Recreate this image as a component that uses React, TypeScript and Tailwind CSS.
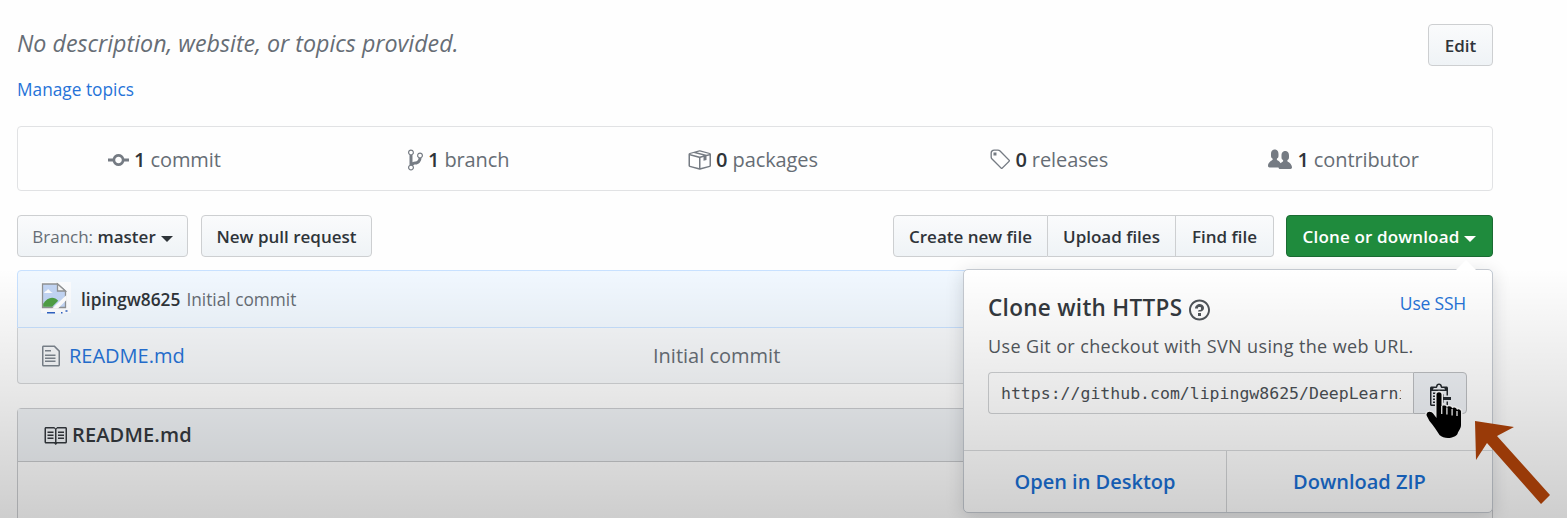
import type { ReactNode } from "react";

const paths = {
  commit:
    "M10.86 7c-.45-1.72-2-3-3.86-3-1.86 0-3.41 1.28-3.86 3H0v2h3.14c.45 1.72 2 3 3.86 3 1.86 0 3.41-1.28 3.86-3H14V7h-3.14zM7 10.2c-1.22 0-2.2-.98-2.2-2.2 0-1.22.98-2.2 2.2-2.2 1.22 0 2.2.98 2.2 2.2 0 1.22-.98 2.2-2.2 2.2z",
  branch:
    "M10 5c0-1.11-.89-2-2-2a1.993 1.993 0 0 0-1 3.72v.3c-.02.52-.23.98-.63 1.38-.4.4-.86.61-1.38.63-.83.02-1.48.16-2 .45V4.72a1.993 1.993 0 0 0-1-3.72C.88 1 0 1.89 0 3a2 2 0 0 0 1 1.72v6.56c-.59.35-1 .99-1 1.72 0 1.11.89 2 2 2 1.11 0 2-.89 2-2 0-.53-.2-1-.53-1.36.09-.06.48-.41.59-.47.25-.11.56-.17.94-.17 1.05-.05 1.95-.45 2.75-1.25S8.95 7.77 9 6.73h-.02C9.59 6.37 10 5.73 10 5zM2 1.8c.66 0 1.2.55 1.2 1.2 0 .65-.55 1.2-1.2 1.2C1.35 4.2.8 3.65.8 3c0-.65.55-1.2 1.2-1.2zm0 12.41c-.66 0-1.2-.55-1.2-1.2 0-.65.55-1.2 1.2-1.2.65 0 1.2.55 1.2 1.2 0 .65-.55 1.2-1.2 1.2zm6-8c-.66 0-1.2-.55-1.2-1.2 0-.65.55-1.2 1.2-1.2.65 0 1.2.55 1.2 1.2 0 .65-.55 1.2-1.2 1.2z",
  pkg: "M1 4.27v7.47c0 .45.3.84.75.97l6.5 1.73c.16.05.34.05.5 0l6.5-1.73c.45-.13.75-.52.75-.97V4.27c0-.45-.3-.84-.75-.97l-6.5-1.74a1.4 1.4 0 0 0-.5 0L1.75 3.3c-.45.13-.75.52-.75.97zm7 9.09l-6-1.59V5l6 1.61v6.75zM2 4l2.5-.67L11 5.06l-2.5.67L2 4zm13 7.77l-6 1.59V6.61l2-.55V8.5l2-.53V5.53L15 5v6.77zm-2-7.24L6.5 2.8l2-.53L15 4l-2 .53z",
  tag: "M7.685 1.72a2.49 2.49 0 0 0-1.76-.726H3.48A2.5 2.5 0 0 0 .994 3.48v2.456c0 .656.269 1.292.726 1.76l6.024 6.024a.99.99 0 0 0 1.402 0l4.563-4.563a.99.99 0 0 0 0-1.402L7.685 1.72zM2.366 7.048a1.54 1.54 0 0 1-.467-1.123V3.48c0-.874.716-1.58 1.58-1.58h2.456c.418 0 .825.159 1.123.467l6.104 6.094-4.702 4.702-6.094-6.114zm.626-4.066h1.989v1.989H2.982V2.982h.01z",
  people:
    "M16 12.999c0 .439-.45 1-1 1H7.995c-.539 0-.994-.447-.995-.999H1c-.54 0-1-.561-1-1 0-2.634 3-4 3-4s.229-.409 0-1c-.841-.621-1.058-.59-1-3 .058-2.419 1.367-3 2.5-3s2.442.58 2.5 3c.058 2.41-.159 2.379-1 3-.229.59 0 1 0 1s1.549.711 2.42 2.088C9.196 9.369 10 8.999 10 8.999s.229-.409 0-1c-.841-.62-1.058-.59-1-3 .058-2.419 1.367-3 2.5-3s2.437.581 2.495 3c.059 2.41-.158 2.38-1 3-.229.59 0 1 0 1s3.005 1.366 3.005 4",
  file: "M6 5H2V4h4v1zM2 8h7V7H2v1zm0 2h7V9H2v1zm0 2h7v-1H2v1zm10-7.5V14c0 .55-.45 1-1 1H1c-.55 0-1-.45-1-1V2c0-.55.45-1 1-1h7.5L12 4.5zM11 5L8 2H1v12h10V5z",
  book: "M3 5h4v1H3V5zm0 3h4V7H3v1zm0 2h4V9H3v1zm11-5h-4v1h4V5zm0 2h-4v1h4V7zm0 2h-4v1h4V9zm2-6v9c0 .55-.45 1-1 1H9.5l-1 1-1-1H2c-.55 0-1-.45-1-1V3c0-.55.45-1 1-1h5.5l1 1 1-1H15c.55 0 1 .45 1 1zm-8 .5L7.5 3H2v9h6V3.5zm7-.5H9.5l-.5.5V12h6V3z",
  question:
    "M6 10h2v2H6v-2zm4-3.5C10 8.64 8 9 8 9H6c0-.55.45-1 1-1h.5c.28 0 .5-.22.5-.5v-1c0-.28-.22-.5-.5-.5h-1c-.28 0-.5.22-.5.5V7H4c0-1.5 1.5-3 3-3s3 1 3 2.5zM7 2.3c3.14 0 5.7 2.56 5.7 5.7s-2.56 5.7-5.7 5.7A5.71 5.71 0 0 1 1.3 8c0-3.14 2.56-5.7 5.7-5.7zM7 1C3.14 1 0 4.14 0 8s3.14 7 7 7 7-3.14 7-7-3.14-7-7-7z",
  clippy:
    "M2 13h4v1H2v-1zm5-6H2v1h5V7zm2 3V8l-3 3 3 3v-2h5v-2H9zM4.5 9H2v1h2.5V9zM2 12h2.5v-1H2v1zm9 1h1v2c-.02.28-.11.52-.3.7-.19.18-.42.28-.7.3H1c-.55 0-1-.45-1-1V4c0-.55.45-1 1-1h3c0-1.11.89-2 2-2 1.11 0 2 .89 2 2h3c.55 0 1 .45 1 1v5h-1V6H1v9h10v-2zM2 5h8c0-.55-.45-1-1-1H8c-.55 0-1-.45-1-1s-.45-1-1-1-1 .45-1 1-.45 1-1 1H3c-.55 0-1 .45-1 1z",
};

function Octicon({ name, w, className = "" }: { name: keyof typeof paths; w: number; className?: string }) {
  return (
    <svg viewBox={`0 0 ${w} 16`} width={w * 1.5} height={24} fill="currentColor" className={`shrink-0 ${className}`}>
      <path fillRule="evenodd" d={paths[name]} />
    </svg>
  );
}

function Caret() {
  return (
    <svg viewBox="0 0 12 6" width="12" height="6" fill="currentColor" className="mt-[3px] shrink-0">
      <path d="M0 0h12L6 6z" />
    </svg>
  );
}

const btn =
  "flex h-[42px] items-center justify-center border border-[#cdcfd1] bg-linear-to-b from-[#fafbfc] to-[#eff3f6] pt-[2px] text-[17px] font-semibold text-[#2f3439] whitespace-nowrap";

function Stat({ icon, w, count, label, shift = "" }: { icon: keyof typeof paths; w: number; count: number; label: string; shift?: string }) {
  return (
    <div className={`flex items-center justify-center pt-[2px] text-[20px] text-[#666d75] ${shift}`}>
      <Octicon name={icon} w={w} className="text-[#757b83]" />
      <b className="ml-[5px] font-semibold text-[#2f3439]">{count}</b>
      <span className="ml-[5px] tracking-[-0.1px]">{label}</span>
    </div>
  );
}

function BrokenImage() {
  return (
    <svg viewBox="0 0 30 34" width="30" height="34" className="shrink-0">
      <path d="M0 0h30v31H0z" fill="#fff" fillOpacity=".75" />
      <path d="M1.500 2h15l8 7v16.500h-23z" fill="#c3d6f5" stroke="#909294" strokeWidth="1.300" />
      <path d="M3 11c1-2 3-2 4-4 2 1 2 3 5 4z" fill="#fff" />
      <path d="M2.200 24.800v-3c4-7 11-8 15-3l-6 6z" fill="#4f9f45" />
      <path d="M16.500 2v7h8z" fill="#f7f7f7" stroke="#909294" strokeWidth="1.300" />
      <path d="M11 26.500L25.500 13v5L17 26.500z" fill="#fff" />
      <path d="M6 30.800h8M20 30.800h1.500M24.500 29h2" stroke="#2f62c4" strokeWidth="1.500" />
    </svg>
  );
}

function HandCursor() {
  return (
    <svg viewBox="0 0 40 52" width="40" height="52" className="absolute top-[17px] left-[9px]">
      <path
        d="M13.500 4.500c0-3 5-3 5 0V17c1-2 5-2 5.300.5 1.200-2 5-1.600 5.300 1 1.300-1.800 4.600-1.200 4.900 1.500 1-1.600 3.800-.5 4 1.500V35c0 4-3 6-3.500 9-2 4-13 6-18 1-3-5-6-9-10-14-2-4-3-5-3-6.500 1-4 5-3 7-.5l3 4z"
        fill="#000"
        stroke="#fff"
        strokeWidth="3"
        strokeLinejoin="round"
        paintOrder="stroke"
      />
      <path d="M18.700 16v8M23.900 17.500v7M29.100 19v6.500M34 21v5" stroke="#e8e8e8" strokeWidth="1.400" />
    </svg>
  );
}

function MenuLink({ children, className }: { children: ReactNode; className: string }) {
  return (
    <a className={`flex items-center justify-center pt-px text-[20px] font-semibold text-[#1a6fd4] ${className}`}>{children}</a>
  );
}

function CloneMenu() {
  return (
    <div className="absolute top-[54px] right-0 z-10 flex h-[244px] w-[530px] flex-col rounded-[5px] border border-[#c4c9d0] bg-white shadow-[0_4px_18px_rgba(27,31,35,0.16)]">
      <svg viewBox="0 0 22 11" width="22" height="11" className="absolute -top-[10px] right-[15px]">
        <path d="M0 11L11 0l11 11z" fill="#fff" />
      </svg>
      <div className="flex flex-1 flex-col px-6 pt-[20px]">
        <div className="flex h-[36px] items-center">
          <h4 className="text-[22.500px] font-semibold tracking-[0.3px] text-[#34393e]">Clone with HTTPS</h4>
          <Octicon name="question" w={14} className="mt-[4px] ml-[7px] text-[#50555a]" />
          <a className="mt-[-9px] mr-[2px] ml-auto text-[17.500px] tracking-[-0.2px] text-[#2673d8]">Use SSH</a>
        </div>
        <p className="mt-[7px] text-[18px] leading-[27px] tracking-[0.370px] whitespace-nowrap text-[#53585d]">
          Use Git or checkout with SVN using the web URL.
        </p>
        <div className="mt-[12px] flex h-[42px] w-[479px]">
          <div className="flex flex-1 items-center overflow-hidden rounded-l-[4px] border border-r-0 border-[#cfd1d3] pt-[2px] pr-[12px] pl-[12px]">
            <span className="w-[400px] overflow-hidden font-['DejaVu_Sans_Mono',monospace] text-[16.500px] whitespace-nowrap text-[#4a4f54]">
              https://github.com/lipingw8625/DeepLearning
            </span>
          </div>
          <div className="relative flex w-[54px] justify-center rounded-r-[4px] border border-[#bcbec1] bg-[#eef1f5] pt-[9px] text-[#24292e]">
            <Octicon name="clippy" w={14} />
            <HandCursor />
          </div>
        </div>
      </div>
      <div className="flex h-[62px] border-t border-[#d8dadc]">
        <MenuLink className="w-[263px] border-r border-[#d3d5d7]">Open in Desktop</MenuLink>
        <MenuLink className="flex-1">Download ZIP</MenuLink>
      </div>
    </div>
  );
}

export default function App() {
  return (
    <div className="relative h-[518px] w-[1567px] overflow-hidden bg-[#fefefe] pt-[24px] pr-[74px] pl-[17px] font-['Open_Sans',sans-serif]">
      <div className="flex h-[42px] items-start justify-between">
        <p className="text-[23.250px] leading-[38px] text-[#666d75] italic">No description, website, or topics provided.</p>
        <button className={`${btn} w-[65px] rounded-[4px]`}>Edit</button>
      </div>
      <a className="mt-[10px] block text-[17.300px] leading-[27px] text-[#2673d8]">Manage topics</a>

      <div className="mt-[23px] grid h-[65px] grid-cols-5 rounded-[4px] border border-[#e1e2e4]">
        <Stat icon="commit" w={14} count={1} label="commit" shift="pr-[2px]" />
        <Stat icon="branch" w={10} count={1} label="branch" shift="pr-[3px]" />
        <Stat icon="pkg" w={16} count={0} label="packages" shift="pr-[5px]" />
        <Stat icon="tag" w={14} count={0} label="releases" shift="pr-[2px]" />
        <Stat icon="people" w={16} count={1} label="contributor" shift="pr-[2px]" />
      </div>

      <div className="mt-[24px] flex">
        <button className={`${btn} w-[171px] gap-[5px] rounded-[4px]`}>
          <span>
            <span className="font-normal text-[#666d75]">Branch:</span> master
          </span>
          <Caret />
        </button>
        <button className={`${btn} ml-[13px] w-[171px] rounded-[4px]`}>New pull request</button>
        <div className="ml-auto flex">
          <button className={`${btn} w-[155px] rounded-l-[4px]`}>Create new file</button>
          <button className={`${btn} w-[128px] border-l-0`}>Upload files</button>
          <button className={`${btn} w-[98px] rounded-r-[4px] border-l-0`}>Find file</button>
        </div>
        <div className="relative ml-[12px]">
          <button className="flex h-[42px] w-[207px] items-center justify-center gap-[5px] rounded-[4px] border border-[#1b6b33] bg-[#1f8b3d] pt-[2px] text-[17px] font-semibold tracking-[0.150px] whitespace-nowrap text-white">
            Clone or download
            <Caret />
          </button>
          <CloneMenu />
        </div>
      </div>

      <div className="mt-[13px] h-[58px] rounded-t-[4px] border border-[#c8e1ff] bg-[#f1f8ff]">
        <div className="flex h-full items-center pl-[23px] text-[17.300px]">
          <BrokenImage />
          <b className="mt-px ml-[10px] font-semibold text-[#2f3439]">lipingw8625</b>
          <span className="mt-px ml-[6px] text-[#666d75]">Initial commit</span>
        </div>
      </div>
      <div className="flex h-[56px] items-center rounded-b-[4px] border border-t-0 border-[#d4d6d8] bg-[#f6f8fa] pl-[24px] text-[20px]">
        <Octicon name="file" w={12} className="text-[#7d858e]" />
        <a className="ml-[9px] w-[584px] text-[#2673d8]">README.md</a>
        <span className="text-[#666d75]">Initial commit</span>
      </div>

      <div className="mt-[24px] h-[120px] rounded-t-[4px] border border-[#cbcdd0]">
        <div className="flex h-[53px] items-center border-b border-[#c8cacd] bg-[#f0f3f6] pl-[25px] text-[20px] font-semibold text-[#34393e]">
          <Octicon name="book" w={16} className="mt-[2px]" />
          <span className="ml-[5px] tracking-[0.150px]">README.md</span>
        </div>
      </div>

      <div className="pointer-events-none absolute inset-x-0 top-[268px] bottom-0 z-20 bg-linear-to-b from-black/0 via-black/9 to-black/19" />
      <svg viewBox="0 0 76 84" width="76" height="84" className="absolute top-[420px] left-[1475px] z-30">
        <path d="M0 1l39 6-17 9 53 59-9 9-54-61L1 40z" fill="#993a08" />
      </svg>
    </div>
  );
}
